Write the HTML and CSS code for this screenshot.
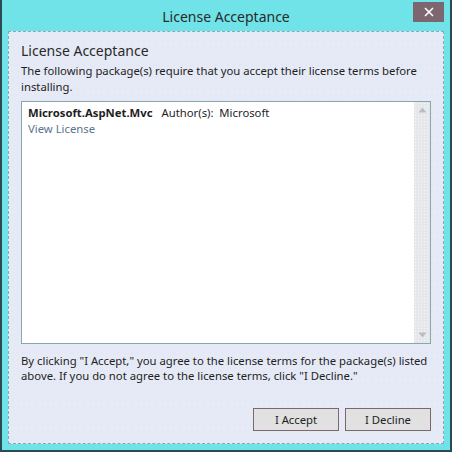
FILE: index.html
```html
<!DOCTYPE html>
<html>
<head>
<meta charset="utf-8">
<link rel="stylesheet" href="styles.css">
</head>
<body>
<div class="window">
  <div class="titlebar">
    <span class="spacer"></span>
    <span class="title">License Acceptance</span>
    <button class="close" aria-label="Close">
      <svg width="10" height="10" viewBox="0 0 10 10"><path d="M1 1L9 9M9 1L1 9" stroke="#fff" stroke-width="1.6"/></svg>
    </button>
  </div>
  <div class="panel">
    <h1 class="heading">License Acceptance</h1>
    <p class="intro">The following package(s) require that you accept their license terms before installing.</p>
    <div class="listbox">
      <div class="items">
        <div class="item">
          <div class="item-line"><span class="pkg">Microsoft.AspNet.Mvc</span><span class="author">Author(s):&nbsp; Microsoft</span></div>
          <a class="view" href="#">View License</a>
        </div>
      </div>
      <div class="scrollbar">
        <svg class="arrow" width="9" height="6" viewBox="0 0 9 6"><path d="M4.5 0.5L8.5 5.5H0.5Z" fill="#b9bec6"/></svg>
        <svg class="arrow" width="9" height="6" viewBox="0 0 9 6"><path d="M4.5 5.5L8.5 0.5H0.5Z" fill="#b9bec6"/></svg>
      </div>
    </div>
    <p class="notice">By clicking "I Accept," you agree to the license terms for the package(s) listed above. If you do not agree to the license terms, click "I Decline."</p>
    <div class="buttons">
      <button class="btn">I Accept</button>
      <button class="btn">I Decline</button>
    </div>
  </div>
</div>
</body>
</html>
```
FILE: styles.css
```css
html, body {
  margin: 0;
  padding: 0;
}
body {
  font-family: "Noto Sans", "Open Sans", sans-serif;
  color: #1e1e1e;
}
.window {
  width: 452px;
  height: 452px;
  box-sizing: border-box;
  background: #70e3e9;
  border: 2px solid #2b4a53;
  border-top: 0;
  display: flex;
  flex-direction: column;
}
.titlebar {
  height: 31px;
  display: grid;
  grid-template-columns: 1fr auto 1fr;
  align-items: start;
}
.title {
  font-size: 14px;
  line-height: 20px;
  margin-top: 7px;
  color: #2a2a2a;
}
.close {
  justify-self: end;
  margin: 2px 6px 0 0;
  width: 31px;
  height: 20px;
  background: #7c6770;
  border: 0;
  padding: 0;
  display: flex;
  align-items: center;
  justify-content: center;
}
.panel {
  flex: 1;
  margin: 0 6px 6px 6px;
  background-color: #e6eaf6;
  background-image: radial-gradient(circle, #dfe3ef 0.6px, transparent 0.8px);
  background-size: 6px 6px;
  border: 1px dashed #86abb4;
  padding: 9px 12px 12px 12px;
  display: flex;
  flex-direction: column;
}
.heading {
  margin: 0;
  font-size: 14px;
  line-height: 20px;
  font-weight: normal;
  color: #2a2a2a;
}
.intro {
  margin: 2px 0 0 0;
  font-size: 11.3px;
  line-height: 16px;
}
.listbox {
  margin-top: 6px;
  height: 243px;
  box-sizing: border-box;
  border: 1px solid #8aa6ad;
  background: #fff;
  display: flex;
}
.items {
  flex: 1;
  padding: 3px 6px;
}
.item-line {
  font-size: 11.3px;
  line-height: 16px;
  display: flex;
  gap: 9px;
}
.pkg {
  font-weight: bold;
}
.view {
  display: block;
  font-size: 11.3px;
  line-height: 16px;
  color: #5b7390;
  text-decoration: none;
}
.scrollbar {
  width: 16px;
  background-color: #e6e7eb;
  background-image: radial-gradient(circle, #f6f6f8 0.6px, transparent 0.9px);
  background-size: 3px 3px;
  display: flex;
  flex-direction: column;
  justify-content: space-between;
  align-items: center;
  padding: 5px 0;
}
.arrow {
  display: block;
}
.notice {
  margin: 9px 0 0 0;
  font-size: 11.3px;
  line-height: 15px;
}
.buttons {
  margin-top: auto;
  display: flex;
  justify-content: flex-end;
  gap: 6px;
}
.btn {
  width: 86px;
  height: 23px;
  box-sizing: border-box;
  border: 1px solid #7c6770;
  background-color: #dcdcdc;
  background-image: radial-gradient(circle, #ececec 0.5px, transparent 0.8px);
  background-size: 2px 2px;
  font-family: "Noto Sans", "Open Sans", sans-serif;
  font-size: 11.3px;
  color: #1e1e1e;
  padding: 0;
}
```
